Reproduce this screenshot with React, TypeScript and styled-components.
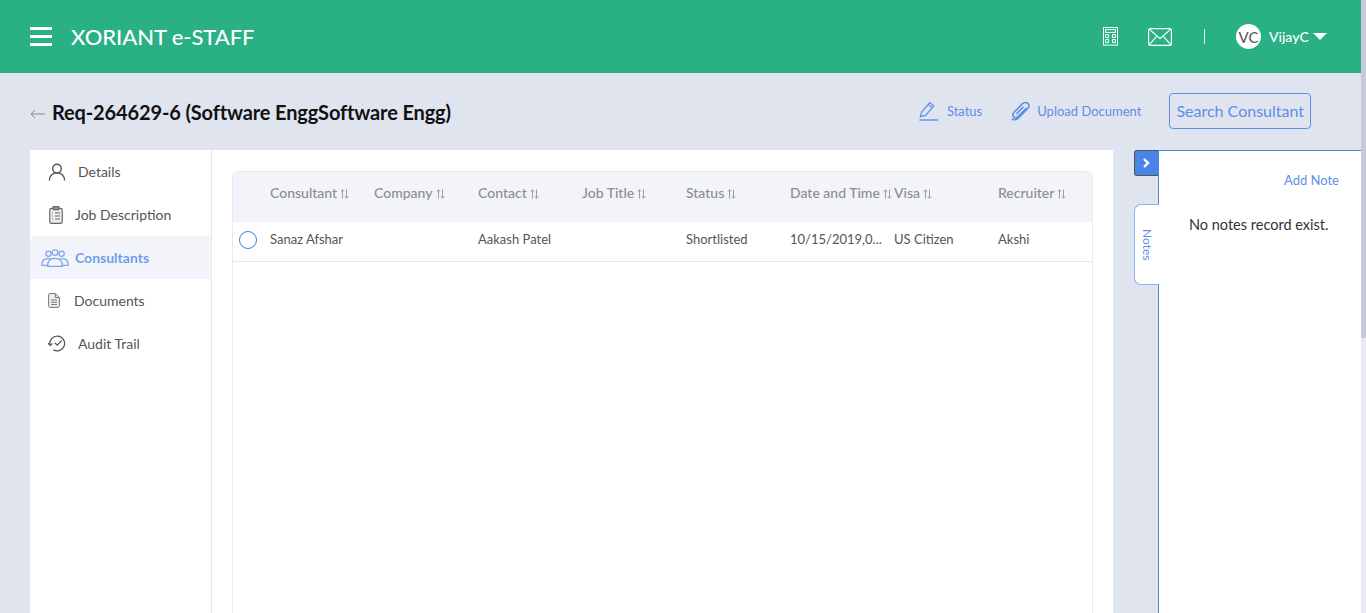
import styled, { createGlobalStyle } from 'styled-components';
import { ReactNode } from 'react';

const GlobalStyle = createGlobalStyle`
  html, body {
    margin: 0;
    padding: 0;
    height: 100%;
    overflow: hidden;
  }
  body {
    font-family: Lato, "Open Sans", sans-serif;
    background: #e0e4ef;
    color: #555;
  }
`;

const columns = [
  { title: 'Consultant', value: 'Sanaz Afshar' },
  { title: 'Company', value: '' },
  { title: 'Contact', value: 'Aakash Patel' },
  { title: 'Job Title', value: '' },
  { title: 'Status', value: 'Shortlisted' },
  { title: 'Date and Time', value: '10/15/2019,0...' },
  { title: 'Visa', value: 'US Citizen' },
  { title: 'Recruiter', value: 'Akshi' },
];

const SortIcon = () => (
  <SortSvg viewBox="0 0 9 10" width={9} height={10} fill="none" stroke="#9a9da3" strokeWidth={1}>
    <path d="M2.5 9.5V.8M.7 2.6 2.5.8l1.8 1.8M6.5.5v8.7M4.7 7.4l1.8 1.8 1.8-1.8" />
  </SortSvg>
);

const PersonIcon = () => (
  <svg width={18} height={18} viewBox="0 0 18 18" fill="none" stroke="#555" strokeWidth={1.4}>
    <circle cx="9" cy="5.6" r="4.3" />
    <path d="M1.4 17.4c0-4.4 3-7.5 7.6-7.5s7.6 3.1 7.6 7.5" />
  </svg>
);

const ClipboardIcon = () => (
  <svg width={14} height={18} viewBox="0 0 14 18" fill="none" stroke="#666" strokeWidth={1.2}>
    <rect x=".8" y="2.4" width="12.4" height="15" rx="1.6" fill="#eee" />
    <rect x="4" y=".7" width="6" height="3" rx=".8" fill="#999" />
    <path d="M3 7h1M6 7h5M3 10h1M6 10h5M3 13h1M6 13h5" />
  </svg>
);

const PeopleIcon = () => (
  <svg width={28} height={18} viewBox="0 0 28 18" fill="none" stroke="#7ba5ea" strokeWidth={1.25}>
    <circle cx="7.5" cy="4.8" r="2.6" />
    <circle cx="14" cy="3.6" r="2.8" />
    <circle cx="20.6" cy="4.8" r="2.6" />
    <path d="M.7 16.4c0-4.4 2.2-6.8 6-6.8 1.2 0 2.2.3 3 .8M27.3 16.4c0-4.4-2.2-6.8-6-6.8-1.2 0-2.2.3-3 .8" />
    <path d="M.7 16.4h6M27.3 16.4h-6" />
    <path d="M6.6 17.3c0-5 2.8-8 7.4-8s7.4 3 7.4 8z" fill="#f3f4f9" />
  </svg>
);

const DocumentIcon = () => (
  <svg width={12} height={15} viewBox="0 0 12 15" fill="#eee" stroke="#777" strokeWidth={1}>
    <path d="M1.5.6h6l3.9 3.9v8.4c0 .8-.6 1.5-1.4 1.5H1.5c-.5 0-.9-.6-.9-1.5V1.6C.6 1 1 .6 1.5.6z" />
    <path d="M7.4.8v3.7h3.8M3 7h6M3 9.3h6M3 11.6h6" fill="none" />
  </svg>
);

const HistoryIcon = () => (
  <svg width={19} height={17} viewBox="0 0 18 16" fill="none" stroke="#555" strokeWidth={1.2}>
    <path d="M1.9 9.4A7 7 0 1 1 5 13.9" />
    <path d="M.2 7.7 2 9.7l2.2-1.6" />
    <path d="M6.5 7.5l2.3 2L13 5" />
  </svg>
);

const CalculatorIcon = () => (
  <svg width={15} height={19} viewBox="0 0 15 19" fill="none" stroke="#fff" strokeWidth={1}>
    <rect x=".5" y=".5" width="14" height="17.6" />
    <rect x="2.6" y="2.6" width="9.8" height="2.8" />
    <path d="M2.6 7.6h3v3h-3zM9.4 7.6h3v3h-3zM2.6 12.6h3v3h-3zM9.4 12.6h3v3h-3z" />
  </svg>
);

const MailIcon = () => (
  <svg width={24} height={18} viewBox="0 0 24 18" fill="none" stroke="#fff" strokeWidth={1.2}>
    <rect x=".6" y=".6" width="22.8" height="16.8" rx="2" />
    <path d="M1.4 1.4 12 10.5l10.6-9.1M1.4 16.6l7.4-8.4M22.6 16.6l-7.4-8.4" />
  </svg>
);

const PencilIcon = () => (
  <svg width={20} height={20} viewBox="0 0 20 20" fill="none" stroke="#5d8ee8" strokeWidth={1.2}>
    <path d="M1.4 15.6 2.6 11 10.8 1.6l4 3.4-8.2 9.4z" />
    <path d="M9.2 3.4l4 3.4" />
    <path d="M.4 19h18.8" strokeWidth={1.4} />
  </svg>
);

const ClipIcon = () => (
  <svg width={20} height={20} viewBox="0 0 20 20" fill="none" stroke="#5d8ee8" strokeWidth={1.6}>
    <path d="M16.5 7 8 15.6c-1.4 1.4-3.3 1.3-4.4.2-1.1-1.1-1.1-3 .2-4.3l8.5-8.6c2-2 4.4-1.7 5.6-.5 1.2 1.2 1.4 3.5-.4 5.4L8.8 16.8c-2.6 2.6-5.4 2.4-7 .8" />
    <path d="M13.5 5.8 6.4 13" />
  </svg>
);

const navItems: { label: string; icon: ReactNode; textGap: number; iconLeft: number; active?: boolean }[] = [
  { label: 'Details', icon: <PersonIcon />, iconLeft: 18, textGap: 12 },
  { label: 'Job Description', icon: <ClipboardIcon />, iconLeft: 19, textGap: 12 },
  { label: 'Consultants', icon: <PeopleIcon />, iconLeft: 11, textGap: 6, active: true },
  { label: 'Documents', icon: <DocumentIcon />, iconLeft: 18, textGap: 14 },
  { label: 'Audit Trail', icon: <HistoryIcon />, iconLeft: 18, textGap: 11 },
];

export default function App() {
  return (
    <>
      <GlobalStyle />
      <Page>
        <Header>
          <Burger aria-label="menu">
            <span />
            <span />
            <span />
          </Burger>
          <Brand>XORIANT e-STAFF</Brand>
          <HeaderTools>
            <ToolIcon $width={45}><CalculatorIcon /></ToolIcon>
            <ToolIcon $width={24}><MailIcon /></ToolIcon>
            <Divider />
            <Avatar>VC</Avatar>
            <UserName>VijayC</UserName>
            <Caret />
          </HeaderTools>
        </Header>

        <TitleBar>
          <BackArrow width={16} height={10} viewBox="0 0 16 10" fill="none" stroke="#888" strokeWidth={1}>
            <path d="M15 5H1M5 1 1 5l4 4" />
          </BackArrow>
          <Title>Req-264629-6 (Software EnggSoftware Engg)</Title>
          <Actions>
            <ActionLink><PencilIcon />Status</ActionLink>
            <ActionLink $gap={7}><ClipIcon />Upload Document</ActionLink>
            <SearchButton>Search Consultant</SearchButton>
          </Actions>
        </TitleBar>

        <Content>
          <MainCard>
            <SideNav>
              {navItems.map((item) => (
                <NavItem key={item.label} $active={item.active} $left={item.iconLeft} $gap={item.textGap}>
                  {item.icon}
                  <span>{item.label}</span>
                </NavItem>
              ))}
            </SideNav>
            <TablePane>
              <Table>
                <HeadRow>
                  {columns.map((col) => (
                    <HeadCell key={col.title}>
                      {col.title}
                      <SortIcon />
                    </HeadCell>
                  ))}
                </HeadRow>
                <BodyRow>
                  <RadioMark />
                  {columns.map((col) => (
                    <BodyCell key={col.title}>{col.value}</BodyCell>
                  ))}
                </BodyRow>
              </Table>
            </TablePane>
          </MainCard>

          <NotesRail>
            <CollapseTab>
              <svg width={9} height={10} viewBox="0 0 9 10" fill="none" stroke="#fff" strokeWidth={2.4}>
                <path d="M2 1l4 4-4 4" />
              </svg>
            </CollapseTab>
            <NotesTab><span>Notes</span></NotesTab>
          </NotesRail>
          <NotesPanel>
            <AddNote>Add Note</AddNote>
            <EmptyNotes>No notes record exist.</EmptyNotes>
          </NotesPanel>
        </Content>
        <Scrollbar />
      </Page>
    </>
  );
}

const Page = styled.div`
  height: 613px;
  display: flex;
  flex-direction: column;
  overflow: hidden;
  position: relative;
`;

const Header = styled.header`
  height: 73px;
  flex: none;
  display: flex;
  align-items: center;
  background: #29b085;
  padding: 0 39px 0 30px;
  color: #fff;
`;

const Burger = styled.div`
  width: 22px;
  display: flex;
  flex-direction: column;
  gap: 5px;
  margin-right: 19px;

  span {
    display: block;
    height: 3px;
    background: #fff;
  }
`;

const Brand = styled.div`
  font-size: 22px;
  font-weight: 500;
  white-space: nowrap;
  letter-spacing: -0.07px;
`;

const HeaderTools = styled.div`
  margin-left: auto;
  display: flex;
  align-items: center;
`;

const ToolIcon = styled.div<{ $width: number }>`
  display: flex;
  width: ${({ $width }) => $width}px;
`;

const Divider = styled.div`
  width: 1px;
  height: 15px;
  background: #e5f5ef;
  margin: 0 31px 0 32px;
`;

const Avatar = styled.div`
  width: 25px;
  height: 25px;
  border-radius: 50%;
  background: #fff;
  color: #555;
  font-size: 15px;
  display: flex;
  align-items: center;
  justify-content: center;
`;

const UserName = styled.div`
  font-size: 14px;
  font-weight: 500;
  margin-left: 8px;
  width: 39px;
  white-space: nowrap;
`;

const Caret = styled.div`
  width: 0;
  height: 0;
  margin-left: 5px;
  border-left: 7px solid transparent;
  border-right: 7px solid transparent;
  border-top: 7px solid #fff;
`;

const TitleBar = styled.div`
  height: 77px;
  flex: none;
  display: flex;
  align-items: center;
  padding: 0 55px 0 30px;
`;

const BackArrow = styled.svg`
  margin: 4px 6px 0 0;
`;

const Title = styled.h1`
  margin: 0;
  font-size: 20px;
  font-weight: 700;
  color: #111;
  letter-spacing: -0.14px;
`;

const Actions = styled.div`
  margin-left: auto;
  display: flex;
  align-items: center;
  margin-bottom: 2px;
`;

const ActionLink = styled.a<{ $gap?: number }>`
  display: flex;
  align-items: center;
  gap: ${({ $gap }) => $gap ?? 8}px;
  color: #5d8ee8;
  font-size: 13px;
  margin-right: 28px;
`;

const SearchButton = styled.button`
  height: 36px;
  padding: 0 6px;
  border: 1px solid #5d8ee8;
  border-radius: 4px;
  background: transparent;
  color: #5d8ee8;
  font-family: inherit;
  font-size: 16px;
`;

const Content = styled.div`
  flex: 1;
  min-height: 0;
  display: flex;
  padding-left: 30px;
`;

const MainCard = styled.div`
  width: 1083px;
  flex: none;
  display: flex;
  background: #fff;
`;

const SideNav = styled.nav`
  width: 181px;
  flex: none;
  border-right: 1px solid #e6e8f0;
`;

const NavItem = styled.div<{ $active?: boolean; $left: number; $gap: number }>`
  height: 43px;
  display: flex;
  align-items: center;
  gap: ${({ $gap }) => $gap}px;
  padding-left: ${({ $left }) => $left}px;
  font-size: 14px;
  font-weight: ${({ $active }) => ($active ? 700 : 400)};
  color: ${({ $active }) => ($active ? '#6f9fea' : '#555')};
  background: ${({ $active }) => ($active ? '#f3f4f9' : 'transparent')};
  border-radius: ${({ $active }) => ($active ? '6px 0 0 0' : '0')};
`;

const TablePane = styled.div`
  flex: 1;
  min-width: 0;
  padding: 21px 20px 0 20px;
  display: flex;
`;

const Table = styled.div`
  flex: 1;
  min-width: 0;
  border: 1px solid #e9ebf2;
  border-bottom: none;
  border-radius: 6px 6px 0 0;
  overflow: hidden;
`;

const HeadRow = styled.div`
  height: 50px;
  display: grid;
  grid-template-columns: repeat(8, 104px);
  padding-left: 37px;
  align-items: center;
  background: #f3f4f9;
`;

const HeadCell = styled.div`
  font-size: 14px;
  font-weight: 500;
  color: #8a8d93;
  white-space: nowrap;
  margin-top: -9px;
`;

const SortSvg = styled.svg`
  margin-left: 3px;
  vertical-align: -1px;
`;

const BodyRow = styled.div`
  height: 39px;
  position: relative;
  display: grid;
  grid-template-columns: repeat(8, 104px);
  padding-left: 37px;
  align-items: center;
  border-bottom: 1px solid #e6e8f0;
`;

const RadioMark = styled.span`
  position: absolute;
  left: 6px;
  top: 9px;
  box-sizing: border-box;
  width: 18px;
  height: 18px;
  border: 1.5px solid #2f7fe8;
  border-radius: 50%;
`;

const BodyCell = styled.div`
  font-size: 13px;
  color: #555;
  white-space: nowrap;
  margin-top: -5px;
`;

const NotesRail = styled.div`
  width: 24px;
  flex: none;
  margin-left: 21px;
  display: flex;
  flex-direction: column;
`;

const CollapseTab = styled.div`
  height: 26px;
  background: #4a84e6;
  border: 1px solid #555;
  border-right: none;
  border-radius: 3px 0 0 3px;
  display: flex;
  align-items: center;
  justify-content: center;
  box-sizing: border-box;
`;

const NotesTab = styled.div`
  height: 81px;
  margin-top: 28px;
  margin-right: -1px;
  box-sizing: border-box;
  background: #fff;
  border: 1px solid #8db2ee;
  border-right: none;
  border-radius: 7px 0 0 7px;
  position: relative;
  z-index: 1;
  display: flex;
  align-items: center;
  justify-content: center;
  color: #5d8ee8;
  font-size: 12px;

  span {
    writing-mode: vertical-rl;
  }
`;

const NotesPanel = styled.aside`
  flex: 1;
  background: #fff;
  border-left: 1px solid #4a84e6;
  border-top: 1px solid #4a84e6;
  padding: 21px 27px 0 0;
  font-size: 14px;
`;

const AddNote = styled.div`
  text-align: right;
  color: #5d8ee8;
  font-size: 13px;
`;

const EmptyNotes = styled.div`
  margin: 28px 0 0 30px;
  color: #333;
  font-size: 14.5px;
`;

const Scrollbar = styled.div`
  position: absolute;
  top: 0;
  right: 0;
  width: 5px;
  height: 100%;
  background: #e9e9f2;

  &::before {
    content: '';
    display: block;
    height: 338px;
    background: #c9cad8;
  }
`;
